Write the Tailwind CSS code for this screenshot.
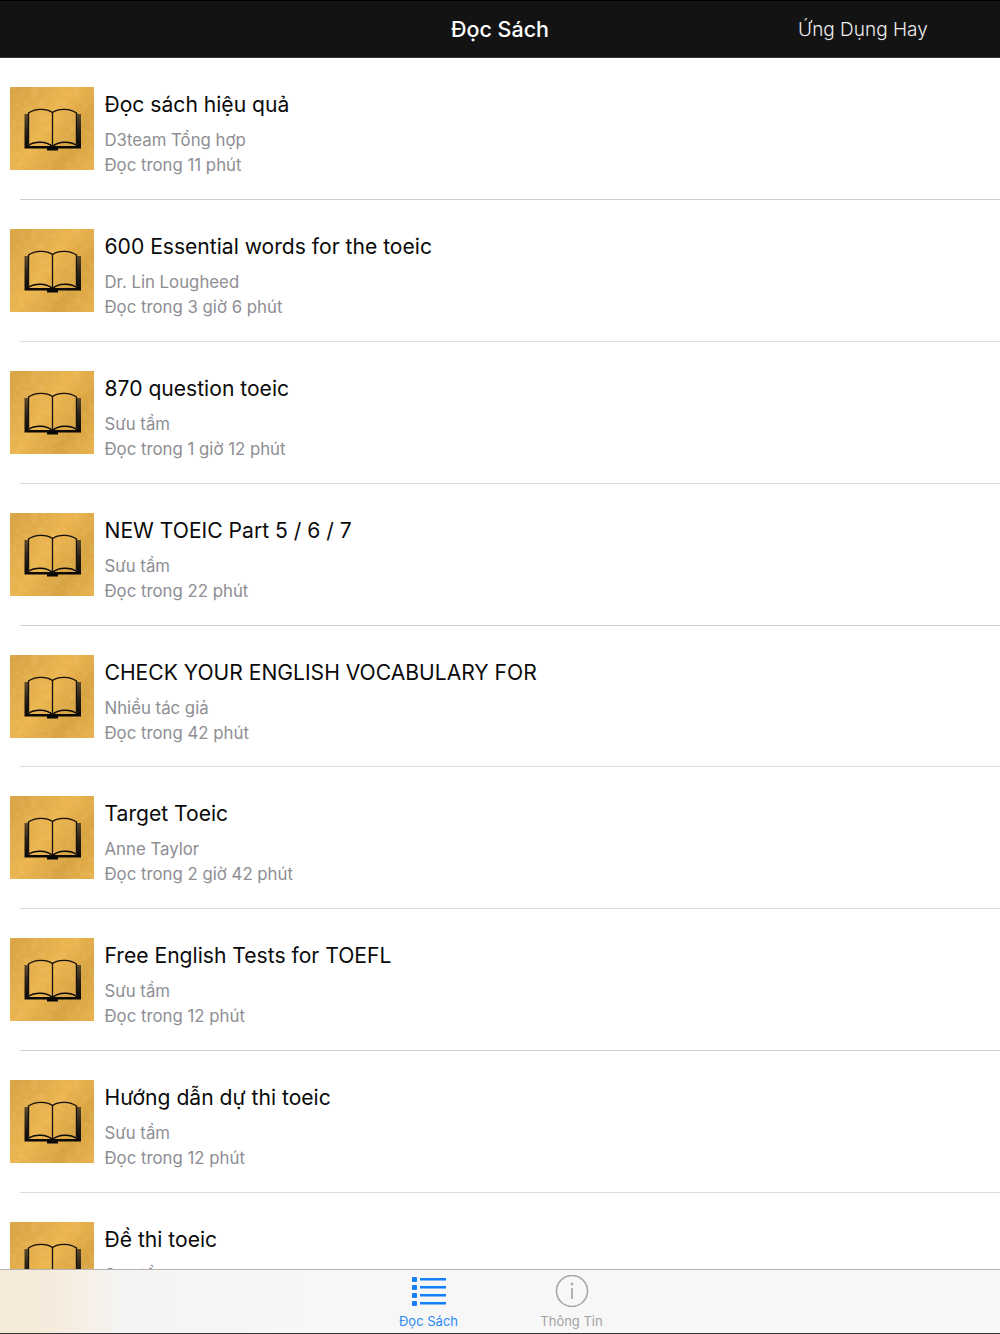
<!DOCTYPE html>
<html lang="en">
<head>
  <meta charset="UTF-8" />
  <title>Đọc Sách</title>
  <script src="https://cdn.jsdelivr.net/npm/@tailwindcss/browser@4"></script>
</head>
<body class="bg-white font-['Inter','Noto_Sans',sans-serif] text-black">
  <svg class="absolute size-0">
    <defs>
      <linearGradient id="cover" x1="0" y1="0" x2="0" y2="1">
        <stop offset="0" stop-color="#5c4a2a"/>
        <stop offset="0.45" stop-color="#2a2217"/>
        <stop offset="1" stop-color="#050505"/>
      </linearGradient>
      <filter id="leather" x="0" y="0" width="100%" height="100%">
        <feTurbulence type="fractalNoise" baseFrequency="0.14 0.2" numOctaves="3" seed="4"/>
        <feColorMatrix values="0 0 0 0 1  0 0 0 0 0.85  0 0 0 0 0.5  1.300 0 0 0 -0.520"/>
      </filter>
    </defs>
    <symbol id="book" viewBox="0 0 84 83">
      <rect width="84" height="83" filter="url(#leather)" opacity="0.22"/>
      <path d="M18.500 57V26C25 21.500 36 21 42.500 25.500C49 21 60 21.500 66.500 26V57" fill="none" stroke="#14100a" stroke-width="1.400"/>
      <path d="M42.500 25.500V59" fill="none" stroke="#14100a" stroke-width="1.300"/>
      <path d="M18 58.500C25 54 36 54 42.500 59.500C49 54 60 54 67 58.500" fill="none" stroke="#0a0806" stroke-width="1.600"/>
      <path d="M14.500 27H18V59H67V27H71V61.500H48V63.500H37V61.500H14.500Z" fill="url(#cover)"/>
    </symbol>
  </svg>

  <div class="relative h-[1334px] w-[1000px] overflow-hidden">
    <header class="flex h-[58px] items-center border-t border-b border-t-black border-b-[#3a3a3a] bg-[#131313] text-white">
      <div class="w-[1000px] text-center text-[21.500px] leading-7 font-medium">Đọc Sách</div>
      <div class="absolute top-[16px] left-[798px] text-[19px] leading-7 font-light text-[#ececec]">Ứng Dụng Hay</div>
    </header>

    <main>
      <div class="flex h-[141.900px] pt-[29px] pl-[10px] relative">
        <div class="h-[83px] w-[84px] shrink-0 bg-[linear-gradient(125deg,#d6a344,#ebb44e_45%,#d7a342,#e8b14b)]"><svg class="h-[83px] w-[84px]"><use href="#book"/></svg></div>
        <div class="ml-[10.500px]">
          <div class="h-[36px] text-[21.100px] leading-[36px] text-[#0a0a0a]">Đọc sách hiệu quả</div>
          <div class="mt-[5px] h-[25px] text-[16.800px] leading-[25px] text-[#8e8e93]">D3team Tổng hợp</div>
          <div class="h-[25px] text-[16.800px] leading-[25px] text-[#8e8e93]">Đọc trong 11 phút</div>
        </div>
        <div class="absolute right-0 bottom-0 left-[20px] h-px bg-[#cfcfd2]"></div>
      </div>
      <div class="flex h-[141.900px] pt-[29px] pl-[10px] relative">
        <div class="h-[83px] w-[84px] shrink-0 bg-[linear-gradient(125deg,#d6a344,#ebb44e_45%,#d7a342,#e8b14b)]"><svg class="h-[83px] w-[84px]"><use href="#book"/></svg></div>
        <div class="ml-[10.500px]">
          <div class="h-[36px] text-[21.100px] leading-[36px] text-[#0a0a0a]">600 Essential words for the toeic</div>
          <div class="mt-[5px] h-[25px] text-[16.800px] leading-[25px] text-[#8e8e93]">Dr. Lin Lougheed</div>
          <div class="h-[25px] text-[16.800px] leading-[25px] text-[#8e8e93]">Đọc trong 3 giờ 6 phút</div>
        </div>
        <div class="absolute right-0 bottom-0 left-[20px] h-px bg-[#dcdcde]"></div>
      </div>
      <div class="flex h-[141.900px] pt-[29px] pl-[10px] relative">
        <div class="h-[83px] w-[84px] shrink-0 bg-[linear-gradient(125deg,#d6a344,#ebb44e_45%,#d7a342,#e8b14b)]"><svg class="h-[83px] w-[84px]"><use href="#book"/></svg></div>
        <div class="ml-[10.500px]">
          <div class="h-[36px] text-[21.100px] leading-[36px] text-[#0a0a0a]">870 question toeic</div>
          <div class="mt-[5px] h-[25px] text-[16.800px] leading-[25px] text-[#8e8e93]">Sưu tầm</div>
          <div class="h-[25px] text-[16.800px] leading-[25px] text-[#8e8e93]">Đọc trong 1 giờ 12 phút</div>
        </div>
        <div class="absolute right-0 bottom-0 left-[20px] h-px bg-[#dcdcde]"></div>
      </div>
      <div class="flex h-[141.900px] pt-[29px] pl-[10px] relative">
        <div class="h-[83px] w-[84px] shrink-0 bg-[linear-gradient(125deg,#d6a344,#ebb44e_45%,#d7a342,#e8b14b)]"><svg class="h-[83px] w-[84px]"><use href="#book"/></svg></div>
        <div class="ml-[10.500px]">
          <div class="h-[36px] text-[21.100px] leading-[36px] text-[#0a0a0a]">NEW TOEIC Part 5 / 6 / 7</div>
          <div class="mt-[5px] h-[25px] text-[16.800px] leading-[25px] text-[#8e8e93]">Sưu tầm</div>
          <div class="h-[25px] text-[16.800px] leading-[25px] text-[#8e8e93]">Đọc trong 22 phút</div>
        </div>
        <div class="absolute right-0 bottom-0 left-[20px] h-px bg-[#cfcfd2]"></div>
      </div>
      <div class="flex h-[141.900px] pt-[29px] pl-[10px] relative">
        <div class="h-[83px] w-[84px] shrink-0 bg-[linear-gradient(125deg,#d6a344,#ebb44e_45%,#d7a342,#e8b14b)]"><svg class="h-[83px] w-[84px]"><use href="#book"/></svg></div>
        <div class="ml-[10.500px]">
          <div class="h-[36px] text-[21.100px] leading-[36px] text-[#0a0a0a]">CHECK YOUR ENGLISH VOCABULARY FOR</div>
          <div class="mt-[5px] h-[25px] text-[16.800px] leading-[25px] text-[#8e8e93]">Nhiều tác giả</div>
          <div class="h-[25px] text-[16.800px] leading-[25px] text-[#8e8e93]">Đọc trong 42 phút</div>
        </div>
        <div class="absolute right-0 bottom-0 left-[20px] h-px bg-[#dcdcde]"></div>
      </div>
      <div class="flex h-[141.900px] pt-[29px] pl-[10px] relative">
        <div class="h-[83px] w-[84px] shrink-0 bg-[linear-gradient(125deg,#d6a344,#ebb44e_45%,#d7a342,#e8b14b)]"><svg class="h-[83px] w-[84px]"><use href="#book"/></svg></div>
        <div class="ml-[10.500px]">
          <div class="h-[36px] text-[21.100px] leading-[36px] text-[#0a0a0a]">Target Toeic</div>
          <div class="mt-[5px] h-[25px] text-[16.800px] leading-[25px] text-[#8e8e93]">Anne Taylor</div>
          <div class="h-[25px] text-[16.800px] leading-[25px] text-[#8e8e93]">Đọc trong 2 giờ 42 phút</div>
        </div>
        <div class="absolute right-0 bottom-0 left-[20px] h-px bg-[#dcdcde]"></div>
      </div>
      <div class="flex h-[141.900px] pt-[29px] pl-[10px] relative">
        <div class="h-[83px] w-[84px] shrink-0 bg-[linear-gradient(125deg,#d6a344,#ebb44e_45%,#d7a342,#e8b14b)]"><svg class="h-[83px] w-[84px]"><use href="#book"/></svg></div>
        <div class="ml-[10.500px]">
          <div class="h-[36px] text-[21.100px] leading-[36px] text-[#0a0a0a]">Free English Tests for TOEFL</div>
          <div class="mt-[5px] h-[25px] text-[16.800px] leading-[25px] text-[#8e8e93]">Sưu tầm</div>
          <div class="h-[25px] text-[16.800px] leading-[25px] text-[#8e8e93]">Đọc trong 12 phút</div>
        </div>
        <div class="absolute right-0 bottom-0 left-[20px] h-px bg-[#cfcfd2]"></div>
      </div>
      <div class="flex h-[141.900px] pt-[29px] pl-[10px] relative">
        <div class="h-[83px] w-[84px] shrink-0 bg-[linear-gradient(125deg,#d6a344,#ebb44e_45%,#d7a342,#e8b14b)]"><svg class="h-[83px] w-[84px]"><use href="#book"/></svg></div>
        <div class="ml-[10.500px]">
          <div class="h-[36px] text-[21.100px] leading-[36px] text-[#0a0a0a]">Hướng dẫn dự thi toeic</div>
          <div class="mt-[5px] h-[25px] text-[16.800px] leading-[25px] text-[#8e8e93]">Sưu tầm</div>
          <div class="h-[25px] text-[16.800px] leading-[25px] text-[#8e8e93]">Đọc trong 12 phút</div>
        </div>
        <div class="absolute right-0 bottom-0 left-[20px] h-px bg-[#dcdcde]"></div>
      </div>
      <div class="flex h-[141.900px] pt-[29px] pl-[10px] relative">
        <div class="h-[83px] w-[84px] shrink-0 bg-[linear-gradient(125deg,#d6a344,#ebb44e_45%,#d7a342,#e8b14b)]"><svg class="h-[83px] w-[84px]"><use href="#book"/></svg></div>
        <div class="ml-[10.500px]">
          <div class="h-[36px] text-[21.100px] leading-[36px] text-[#0a0a0a]">Đề thi toeic</div>
          <div class="mt-[5px] h-[25px] text-[16.800px] leading-[25px] text-[#8e8e93]">Sưu tầm</div>
        </div>
      </div>
    </main>

    <nav class="absolute right-0 bottom-0 left-0 flex h-[65px] justify-center gap-[63px] border-t border-b border-t-[#b4b4b4] border-b-[#333] bg-[linear-gradient(90deg,#f6ead9,#f6ebdc_5%,#f6f0e8_9%,#f5f4f2_12%,#f7f7f7_30%)]">
      <div class="flex w-[80px] flex-col items-center pt-[5px] text-[#2a8af6]">
        <svg class="h-[32px] w-[36px]" viewBox="0 0 36 32" fill="#157efb">
          <rect x="1" y="2" width="5" height="5" rx="1"/><rect x="1" y="10" width="5" height="5" rx="1"/><rect x="1" y="18" width="5" height="5" rx="1"/><rect x="1" y="26" width="5" height="5" rx="1"/>
          <rect x="9" y="3" width="26" height="2.500"/><rect x="9" y="11" width="26" height="2.500"/><rect x="9" y="19" width="26" height="2.500"/><rect x="9" y="27" width="26" height="2.500"/>
        </svg>
        <div class="mt-[6px] text-[13px] leading-4">Đọc Sách</div>
      </div>
      <div class="flex w-[80px] flex-col items-center pt-[5px] text-[#a3a3a3]">
        <svg class="h-[32px] w-[36px]" viewBox="0 0 36 32">
          <circle cx="18" cy="16" r="15.500" fill="none" stroke="#a3a3a3" stroke-width="1.500"/>
          <circle cx="18" cy="9" r="1.300" fill="#a3a3a3"/><rect x="17.200" y="13" width="1.600" height="11" fill="#a3a3a3"/>
        </svg>
        <div class="mt-[6px] text-[13px] leading-4">Thông Tin</div>
      </div>
    </nav>
  </div>
</body>
</html>
